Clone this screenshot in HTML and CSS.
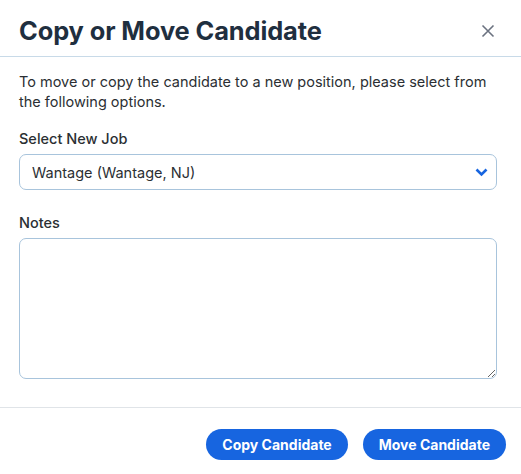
FILE: index.html
```html
<!DOCTYPE html>
<html lang="en">
<head>
  <meta charset="UTF-8">
  <title>Copy or Move Candidate</title>
  <link rel="stylesheet" href="styles.css">
</head>
<body>
  <div class="modal">
    <div class="modal-header">
      <h1>Copy or Move Candidate</h1>
      <button class="close" aria-label="Close">
        <svg width="14" height="14" viewBox="0 0 14 14"><path d="M1.5 1.5 L12.5 12.5 M12.5 1.5 L1.5 12.5" stroke="#6b7280" stroke-width="1.6" fill="none"/></svg>
      </button>
    </div>

    <div class="modal-body">
      <p class="intro">To move or copy the candidate to a new position, please select from the following options.</p>

      <label for="job">Select New Job</label>
      <div class="select-wrap">
        <select id="job">
          <option>Wantage (Wantage, NJ)</option>
        </select>
        <svg class="chevron" width="13" height="9" viewBox="0 0 13 9"><path d="M1.5 1.5 L6.5 6.5 L11.5 1.5" stroke="#1765e0" stroke-width="2.6" fill="none"/></svg>
      </div>

      <label for="notes">Notes</label>
      <textarea id="notes"></textarea>
    </div>

    <div class="modal-footer">
      <button class="btn">Copy Candidate</button>
      <button class="btn">Move Candidate</button>
    </div>
  </div>
</body>
</html>
```

FILE: styles.css
```css
body {
  margin: 0;
  font-family: Inter, "Noto Sans", Arial, sans-serif;
  background: #fff;
  color: #2b2f33;
}

.modal {
  width: 521px;
}

.modal-header {
  display: flex;
  align-items: center;
  justify-content: space-between;
  height: 57px;
  padding: 5px 19px 0;
  border-bottom: 1px solid #c8dae8;
  box-sizing: border-box;
}

.modal-header h1 {
  margin: 0;
  font-size: 25.4px;
  font-weight: 700;
  color: #1f2f3f;
  letter-spacing: -0.1px;
}

.close {
  background: none;
  border: none;
  padding: 0;
  margin-right: 7px;
  cursor: pointer;
  display: flex;
}

.modal-body {
  padding: 15px 24px 28px 19px;
}

.intro {
  margin: 0 0 17px;
  font-size: 14.5px;
  line-height: 20px;
  color: #2b2f33;
}

label {
  display: block;
  font-size: 14.5px;
  font-weight: 500;
  line-height: 20px;
  margin-bottom: 5px;
  color: #2b2f33;
}

.select-wrap {
  position: relative;
  margin-bottom: 23px;
}

select {
  width: 100%;
  height: 36px;
  -webkit-appearance: none;
  appearance: none;
  border: 1px solid #a8c4dc;
  border-radius: 7px;
  background: #fff;
  padding: 0 12px;
  font-family: inherit;
  font-size: 14.5px;
  color: #2b2f33;
  box-sizing: border-box;
}

.chevron {
  position: absolute;
  right: 9px;
  top: 14px;
  pointer-events: none;
}

textarea {
  display: block;
  width: 100%;
  height: 141px;
  margin-top: 4px;
  border: 1px solid #a8c4dc;
  border-radius: 7px;
  box-sizing: border-box;
  font-family: inherit;
  font-size: 14px;
  resize: vertical;
}

.modal-footer {
  display: flex;
  justify-content: flex-end;
  gap: 15px;
  border-top: 1px solid #e0e4e8;
  padding: 21px 15px 0;
}

.btn {
  background: #1765e0;
  color: #fff;
  border: none;
  border-radius: 16px;
  height: 31px;
  padding: 0 16px;
  font-family: inherit;
  font-size: 14px;
  font-weight: 700;
  cursor: pointer;
}
```
